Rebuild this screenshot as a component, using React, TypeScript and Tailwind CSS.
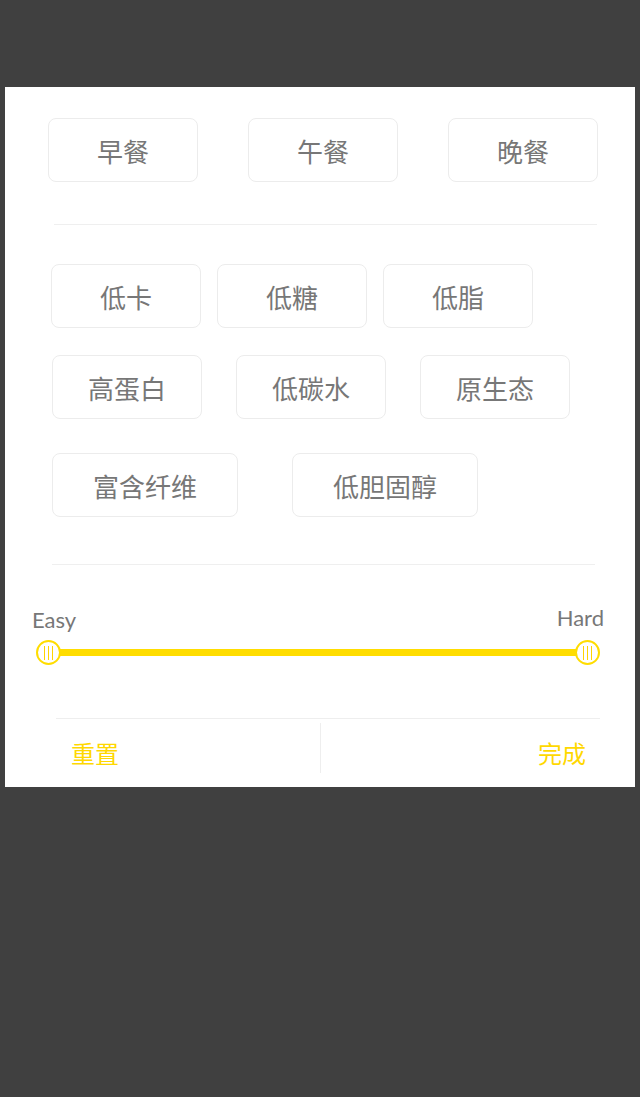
const meals = ["早餐", "午餐", "晚餐"];
const rowA = ["低卡", "低糖", "低脂"];
const rowB = ["高蛋白", "低碳水", "原生态"];
const rowC = ["富含纤维", "低胆固醇"];

const cjk = { fontFamily: "'Noto Sans CJK SC', 'Noto Sans', sans-serif" };
const latin = { fontFamily: "Lato, 'Noto Sans', sans-serif" };

function Tag({ label, wide }: { label: string; wide?: boolean }) {
  return (
    <div
      className={`${wide ? "w-[186px]" : "w-[150px]"} h-[64px] flex items-center justify-center rounded-[8px] border border-[#ececec] bg-white text-[26px] text-[#777777]`}
      style={cjk}
    >
      {label}
    </div>
  );
}

function Handle({ side }: { side: "left" | "right" }) {
  return (
    <div
      className={`absolute top-0 ${side === "left" ? "left-0" : "right-0"} w-[25px] h-[25px] rounded-full border-2 border-[#ffdd00] bg-white flex items-center justify-center gap-[3px]`}
    >
      <span className="w-px h-[14px] bg-[#ffd400]" />
      <span className="w-px h-[14px] bg-[#ffd400]" />
      <span className="w-px h-[14px] bg-[#ffd400]" />
    </div>
  );
}

export default function App() {
  return (
    <div className="min-h-screen bg-[#404040] pt-[87px]">
      <div className="mx-[5px] h-[700px] bg-white flex flex-col">
        {/* meal type */}
        <div className="mt-[31px] ml-[43px] flex gap-[50px]">
          {meals.map((m) => (
            <Tag key={m} label={m} />
          ))}
        </div>

        <div className="mt-[42px] ml-[49px] mr-[38px] h-px bg-[#efefef]" />

        {/* diet tags */}
        <div className="mt-[39px] ml-[46px] flex gap-[16px]">
          {rowA.map((t) => (
            <Tag key={t} label={t} />
          ))}
        </div>
        <div className="mt-[27px] ml-[47px] flex gap-[34px]">
          {rowB.map((t) => (
            <Tag key={t} label={t} />
          ))}
        </div>
        <div className="mt-[34px] ml-[47px] flex gap-[54px]">
          {rowC.map((t) => (
            <Tag key={t} label={t} wide />
          ))}
        </div>

        <div className="mt-[47px] ml-[47px] mr-[40px] h-px bg-[#efefef]" />

        {/* difficulty */}
        <div
          className="mt-[42px] pl-[27px] pr-[31px] flex justify-between text-[22px] leading-none text-[#777777]"
          style={latin}
        >
          <span className="pt-[2px]">Easy</span>
          <span>Hard</span>
        </div>
        <div className="relative mt-[9px] ml-[31px] mr-[35px] h-[25px]">
          <div className="absolute left-[12px] right-[12px] top-[9px] h-[7px] bg-[#ffdd00]" />
          <Handle side="left" />
          <Handle side="right" />
        </div>

        {/* actions */}
        <div className="mt-auto ml-[51px] mr-[35px] h-[69px] border-t border-[#eeeeee] flex" style={cjk}>
          <div className="w-[264px] pl-[15px] flex items-center text-[24px] text-[#ffd800]">重置</div>
          <div className="mt-[4px] h-[50px] w-px bg-[#eeeeee]" />
          <div className="flex-1 pr-[14px] flex items-center justify-end text-[24px] text-[#ffd800]">完成</div>
        </div>
      </div>
    </div>
  );
}
